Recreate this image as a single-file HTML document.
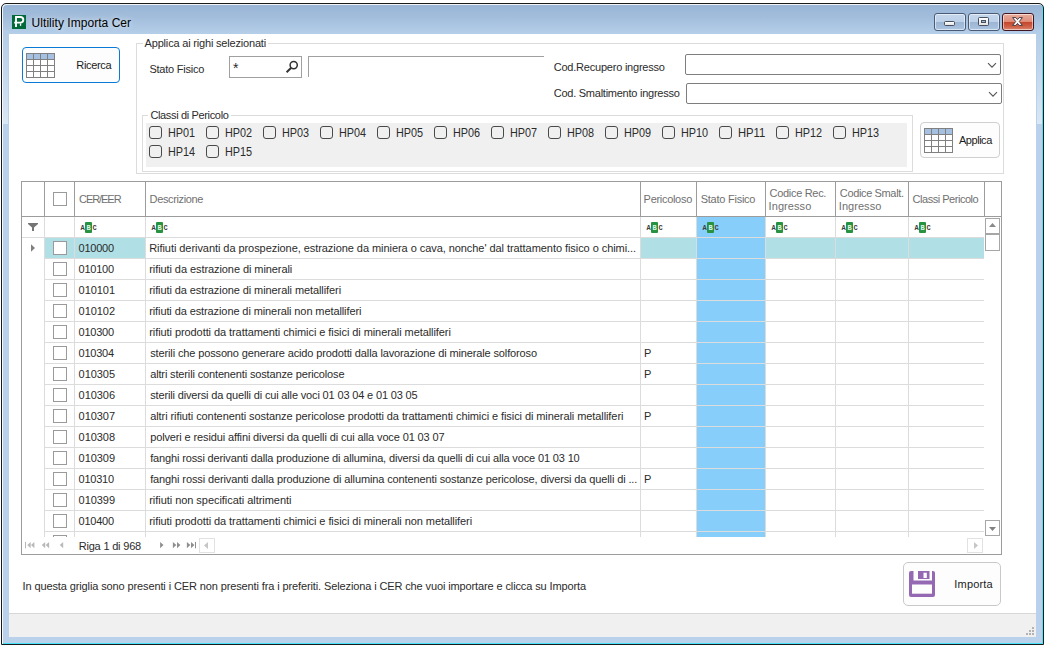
<!DOCTYPE html>
<html lang="it"><head><meta charset="utf-8"><title>Ultility Importa Cer</title>
<style>
html,body{margin:0;padding:0}
body{width:1045px;height:646px;background:#fff;position:relative;overflow:hidden;font-family:'Liberation Sans',sans-serif;font-size:11px;color:#2b2b2b}
div,span,svg{position:absolute;box-sizing:border-box}
.t{white-space:pre;line-height:14px;height:14px}
.win{left:1px;top:3px;width:1043px;height:642px;border:1px solid #1a1a1a;border-radius:5px 5px 0 0;
 background:linear-gradient(to bottom,#98b4d5 0px,#a3bedc 14px,#b5cfe9 30px,#b9d1ea 90px,#b9d1ea 100%);
 box-shadow:inset 1px 1px 0 rgba(255,255,255,.85),inset -1px -1px 0 #45e4fb}
.client{left:9px;top:34px;width:1027px;height:603px;background:#fff}
.cb{width:13px;height:13px;border:1px solid #4a4a4a;border-radius:3px;background:#f0f0f0}
.gcb{width:14px;height:14px;border:1px solid #9a9a9a;background:#fff}
.vl{width:1px;background:#dcdcdc}
.hl{height:1px;background:#dcdcdc}
.hv{width:1px;background:#9c9c9c}
.wb{top:13px;width:32px;height:18px;border:1px solid #4a5b75;border-radius:3px;box-shadow:inset 0 0 0 1px rgba(255,255,255,.55)}
</style></head><body>

<div class="win"></div>
<div class="wb" style="left:934px;background:linear-gradient(to bottom,#c4d6eb 0,#bdd1e8 47%,#9cb5d3 50%,#a4bddb 80%,#adc6e2 100%)"><div style="left:9px;top:7px;width:11px;height:5px;border:1px solid #46505f;border-radius:1.5px;background:linear-gradient(#fff,#e4e4e4)"></div></div>
<div class="wb" style="left:968px;background:linear-gradient(to bottom,#c4d6eb 0,#bdd1e8 47%,#9cb5d3 50%,#a4bddb 80%,#adc6e2 100%)"><div style="left:9px;top:3px;width:11px;height:9px;border:1px solid #46505f;border-radius:1.5px;background:linear-gradient(#fff,#e4e4e4)"><div style="left:2px;top:2px;width:5px;height:3px;border:1px solid #46505f;background:#9db6d4"></div></div></div>
<div class="wb" style="left:1002px;border-color:#431520;background:linear-gradient(to bottom,#e9ad9e 0,#df8d79 47%,#c3452b 50%,#cf6249 80%,#dc8a74 100%)"><svg style="left:9px;top:3px" width="12" height="10" viewBox="0 0 12 10"><path d="M0.6 0.6 L3.9 0.6 L5.5 2.6 L7.1 0.6 L10.4 0.6 L7.3 4.5 L10.4 8.4 L7.1 8.4 L5.5 6.4 L3.9 8.4 L0.6 8.4 L3.7 4.5 Z" fill="#fafafa" stroke="#4a3c42" stroke-width="1" stroke-linejoin="round"/></svg></div>
<div style="left:12px;top:15px;width:14px;height:14px;background:#006a3a"><svg style="left:0;top:0" width="14" height="14" viewBox="0 0 14 14"><path d="M4 11.9 V2 H8.3 C12.3 2 12.3 7.6 8.3 7.6 H2.2" fill="none" stroke="#fff" stroke-width="1.9"/><rect x="7.9" y="8.4" width="1.3" height="2.4" fill="#fff"/></svg></div>
<div style="left:3px;top:30px;width:5px;height:94px;background:linear-gradient(to bottom,#b4cce7 0,#c3d7ed 45%,#dae7f4 100%)"></div>
<div style="left:1037px;top:30px;width:5px;height:94px;background:linear-gradient(to bottom,#b4cce7 0,#c3d7ed 45%,#dae7f4 100%)"></div>
<div class="client"></div>
<div style="left:9px;top:613px;width:1027px;height:24px;background:#f0f0f0;border-top:1px solid #d7d7d7"></div>
<div style="left:1032px;top:627px;width:2px;height:2px;background:#b3b3b3"></div>
<div style="left:1029px;top:630px;width:2px;height:2px;background:#b3b3b3"></div>
<div style="left:1032px;top:630px;width:2px;height:2px;background:#b3b3b3"></div>
<div style="left:1026px;top:633px;width:2px;height:2px;background:#b3b3b3"></div>
<div style="left:1029px;top:633px;width:2px;height:2px;background:#b3b3b3"></div>
<div style="left:1032px;top:633px;width:2px;height:2px;background:#b3b3b3"></div>
<div style="left:22px;top:47px;width:98px;height:36px;border:1px solid #0a7ad6;border-radius:4px;background:#fdfdfd"></div>
<svg style="left:26px;top:53px" width="29" height="25" viewBox="0 0 29 25" shape-rendering="crispEdges"><rect x="0.5" y="0.5" width="28" height="24" fill="#fff" stroke="#808080"/><rect x="1" y="1" width="27" height="5" fill="#a6c0e2"/><line x1="7.5" y1="0" x2="7.5" y2="25" stroke="#808080"/><line x1="14.5" y1="0" x2="14.5" y2="25" stroke="#808080"/><line x1="21.5" y1="0" x2="21.5" y2="25" stroke="#808080"/><line x1="0" y1="6.5" x2="29" y2="6.5" stroke="#808080"/><line x1="0" y1="12.5" x2="29" y2="12.5" stroke="#808080"/><line x1="0" y1="18.5" x2="29" y2="18.5" stroke="#808080"/></svg>
<div style="left:136px;top:43px;width:868px;height:131px;border:1px solid #dcdcdc"></div>
<div style="left:229px;top:56px;width:73px;height:22px;border:1px solid #a0a0a0;background:#fff"></div>
<svg style="left:284px;top:59px" width="16" height="16" viewBox="0 0 16 16"><circle cx="9.7" cy="6.1" r="3.6" fill="none" stroke="#333" stroke-width="1.5"/><line x1="7.2" y1="8.8" x2="2.6" y2="13.2" stroke="#333" stroke-width="2"/></svg>
<div style="left:308px;top:56px;width:236px;height:21px;border-top:1px solid #a0a0a0;border-left:1px solid #a0a0a0;background:#fff"></div>
<div style="left:685px;top:54px;width:316px;height:21px;border:1px solid #7e7e7e;border-radius:2px;background:#fff"><svg style="right:3px;top:7px" width="11" height="7" viewBox="0 0 11 7"><path d="M2 1.2 L6 5.2 L10 1.2" fill="none" stroke="#555" stroke-width="1.1"/></svg></div>
<div style="left:686px;top:83px;width:316px;height:21px;border:1px solid #7e7e7e;border-radius:2px;background:#fff"><svg style="right:3px;top:7px" width="11" height="7" viewBox="0 0 11 7"><path d="M2 1.2 L6 5.2 L10 1.2" fill="none" stroke="#555" stroke-width="1.1"/></svg></div>
<div style="left:142px;top:115px;width:771px;height:57px;border:1px solid #dcdcdc"></div>
<div style="left:146px;top:123px;width:761px;height:44px;background:#f0f0f0"></div>
<div class="cb" style="left:149px;top:126px"></div>
<div class="cb" style="left:206px;top:126px"></div>
<div class="cb" style="left:263px;top:126px"></div>
<div class="cb" style="left:320px;top:126px"></div>
<div class="cb" style="left:377px;top:126px"></div>
<div class="cb" style="left:434px;top:126px"></div>
<div class="cb" style="left:491px;top:126px"></div>
<div class="cb" style="left:548px;top:126px"></div>
<div class="cb" style="left:605px;top:126px"></div>
<div class="cb" style="left:662px;top:126px"></div>
<div class="cb" style="left:719px;top:126px"></div>
<div class="cb" style="left:776px;top:126px"></div>
<div class="cb" style="left:833px;top:126px"></div>
<div class="cb" style="left:149px;top:145px"></div>
<div class="cb" style="left:206px;top:145px"></div>
<div style="left:920px;top:122px;width:80px;height:36px;border:1px solid #d0d0d0;border-radius:4px;background:#fdfdfd"></div>
<svg style="left:924px;top:128px" width="29" height="25" viewBox="0 0 29 25" shape-rendering="crispEdges"><rect x="0.5" y="0.5" width="28" height="24" fill="#fff" stroke="#808080"/><rect x="1" y="1" width="27" height="5" fill="#a6c0e2"/><line x1="7.5" y1="0" x2="7.5" y2="25" stroke="#808080"/><line x1="14.5" y1="0" x2="14.5" y2="25" stroke="#808080"/><line x1="21.5" y1="0" x2="21.5" y2="25" stroke="#808080"/><line x1="0" y1="6.5" x2="29" y2="6.5" stroke="#808080"/><line x1="0" y1="12.5" x2="29" y2="12.5" stroke="#808080"/><line x1="0" y1="18.5" x2="29" y2="18.5" stroke="#808080"/></svg>
<div style="left:21px;top:181px;width:981px;height:374px;border:1px solid #9c9c9c;background:#fff"></div>
<div style="left:45px;top:238px;width:100px;height:20px;background:#b0e0e6"></div>
<div style="left:641px;top:238px;width:343px;height:20px;background:#b0e0e6"></div>
<div style="left:697px;top:217px;width:68px;height:320px;background:#87cefa"></div>
<div style="left:21px;top:216px;width:981px;height:1px;background:#9c9c9c"></div>
<div class="hv" style="left:44px;top:182px;height:34px"></div>
<div class="vl" style="left:44px;top:217px;height:320px"></div>
<div class="hv" style="left:74px;top:182px;height:34px"></div>
<div class="vl" style="left:74px;top:217px;height:320px"></div>
<div class="hv" style="left:145px;top:182px;height:34px"></div>
<div class="vl" style="left:145px;top:217px;height:320px"></div>
<div class="hv" style="left:640px;top:182px;height:34px"></div>
<div class="vl" style="left:640px;top:217px;height:320px"></div>
<div class="hv" style="left:696px;top:182px;height:34px"></div>
<div class="vl" style="left:696px;top:217px;height:320px"></div>
<div class="hv" style="left:765px;top:182px;height:34px"></div>
<div class="vl" style="left:765px;top:217px;height:320px"></div>
<div class="hv" style="left:835px;top:182px;height:34px"></div>
<div class="vl" style="left:835px;top:217px;height:320px"></div>
<div class="hv" style="left:908px;top:182px;height:34px"></div>
<div class="vl" style="left:908px;top:217px;height:320px"></div>
<div class="hv" style="left:984px;top:182px;height:34px"></div>
<div class="hv" style="left:984px;top:217px;height:337px;background:#fff"></div>
<div class="hl" style="left:22px;top:237px;width:962px"></div>
<div class="hl" style="left:44px;top:258px;width:940px"></div>
<div class="hl" style="left:44px;top:279px;width:940px"></div>
<div class="hl" style="left:44px;top:300px;width:940px"></div>
<div class="hl" style="left:44px;top:321px;width:940px"></div>
<div class="hl" style="left:44px;top:342px;width:940px"></div>
<div class="hl" style="left:44px;top:363px;width:940px"></div>
<div class="hl" style="left:44px;top:384px;width:940px"></div>
<div class="hl" style="left:44px;top:405px;width:940px"></div>
<div class="hl" style="left:44px;top:426px;width:940px"></div>
<div class="hl" style="left:44px;top:447px;width:940px"></div>
<div class="hl" style="left:44px;top:468px;width:940px"></div>
<div class="hl" style="left:44px;top:489px;width:940px"></div>
<div class="hl" style="left:44px;top:510px;width:940px"></div>
<div class="hl" style="left:44px;top:531px;width:940px"></div>
<div class="gcb" style="left:53px;top:192px"></div>
<div class="gcb" style="left:53px;top:241px"></div>
<div class="gcb" style="left:53px;top:262px"></div>
<div class="gcb" style="left:53px;top:283px"></div>
<div class="gcb" style="left:53px;top:304px"></div>
<div class="gcb" style="left:53px;top:325px"></div>
<div class="gcb" style="left:53px;top:346px"></div>
<div class="gcb" style="left:53px;top:367px"></div>
<div class="gcb" style="left:53px;top:388px"></div>
<div class="gcb" style="left:53px;top:409px"></div>
<div class="gcb" style="left:53px;top:430px"></div>
<div class="gcb" style="left:53px;top:451px"></div>
<div class="gcb" style="left:53px;top:472px"></div>
<div class="gcb" style="left:53px;top:493px"></div>
<div class="gcb" style="left:53px;top:514px"></div>
<div style="left:53px;top:535px;width:14px;height:2px;border:1px solid #9a9a9a;border-bottom:0;background:#fff"></div>
<svg style="left:28px;top:223px" width="10" height="8" viewBox="0 0 10 8"><path d="M0 0 H10 V1 L6 4.6 V8 H4 V4.6 L0 1 Z" fill="#757575"/></svg>
<svg style="left:31px;top:244px" width="5" height="8" viewBox="0 0 5 8"><path d="M0 0.3 L4 4 L0 7.7 Z" fill="#808080"/></svg>
<div style="left:81px;top:222px;width:16px;height:11px"><div style="left:4px;top:0;width:7px;height:11px;border-radius:1px;background:#27923f"></div><span style="font-family:'Liberation Mono',monospace;font-weight:bold;font-size:7px;line-height:7px;height:7px;top:3px;width:5px;text-align:center;left:-1px;color:#3c3c3c">A</span><span style="font-family:'Liberation Mono',monospace;font-weight:bold;font-size:7px;line-height:7px;height:7px;top:3px;width:5px;text-align:center;left:5px;color:#e4f5e7">B</span><span style="font-family:'Liberation Mono',monospace;font-weight:bold;font-size:7px;line-height:7px;height:7px;top:3px;width:5px;text-align:center;left:11px;color:#3c3c3c">C</span></div>
<div style="left:152px;top:222px;width:16px;height:11px"><div style="left:4px;top:0;width:7px;height:11px;border-radius:1px;background:#27923f"></div><span style="font-family:'Liberation Mono',monospace;font-weight:bold;font-size:7px;line-height:7px;height:7px;top:3px;width:5px;text-align:center;left:-1px;color:#3c3c3c">A</span><span style="font-family:'Liberation Mono',monospace;font-weight:bold;font-size:7px;line-height:7px;height:7px;top:3px;width:5px;text-align:center;left:5px;color:#e4f5e7">B</span><span style="font-family:'Liberation Mono',monospace;font-weight:bold;font-size:7px;line-height:7px;height:7px;top:3px;width:5px;text-align:center;left:11px;color:#3c3c3c">C</span></div>
<div style="left:647px;top:222px;width:16px;height:11px"><div style="left:4px;top:0;width:7px;height:11px;border-radius:1px;background:#27923f"></div><span style="font-family:'Liberation Mono',monospace;font-weight:bold;font-size:7px;line-height:7px;height:7px;top:3px;width:5px;text-align:center;left:-1px;color:#3c3c3c">A</span><span style="font-family:'Liberation Mono',monospace;font-weight:bold;font-size:7px;line-height:7px;height:7px;top:3px;width:5px;text-align:center;left:5px;color:#e4f5e7">B</span><span style="font-family:'Liberation Mono',monospace;font-weight:bold;font-size:7px;line-height:7px;height:7px;top:3px;width:5px;text-align:center;left:11px;color:#3c3c3c">C</span></div>
<div style="left:703px;top:222px;width:16px;height:11px"><div style="left:4px;top:0;width:7px;height:11px;border-radius:1px;background:#27923f"></div><span style="font-family:'Liberation Mono',monospace;font-weight:bold;font-size:7px;line-height:7px;height:7px;top:3px;width:5px;text-align:center;left:-1px;color:#3c3c3c">A</span><span style="font-family:'Liberation Mono',monospace;font-weight:bold;font-size:7px;line-height:7px;height:7px;top:3px;width:5px;text-align:center;left:5px;color:#e4f5e7">B</span><span style="font-family:'Liberation Mono',monospace;font-weight:bold;font-size:7px;line-height:7px;height:7px;top:3px;width:5px;text-align:center;left:11px;color:#3c3c3c">C</span></div>
<div style="left:772px;top:222px;width:16px;height:11px"><div style="left:4px;top:0;width:7px;height:11px;border-radius:1px;background:#27923f"></div><span style="font-family:'Liberation Mono',monospace;font-weight:bold;font-size:7px;line-height:7px;height:7px;top:3px;width:5px;text-align:center;left:-1px;color:#3c3c3c">A</span><span style="font-family:'Liberation Mono',monospace;font-weight:bold;font-size:7px;line-height:7px;height:7px;top:3px;width:5px;text-align:center;left:5px;color:#e4f5e7">B</span><span style="font-family:'Liberation Mono',monospace;font-weight:bold;font-size:7px;line-height:7px;height:7px;top:3px;width:5px;text-align:center;left:11px;color:#3c3c3c">C</span></div>
<div style="left:842px;top:222px;width:16px;height:11px"><div style="left:4px;top:0;width:7px;height:11px;border-radius:1px;background:#27923f"></div><span style="font-family:'Liberation Mono',monospace;font-weight:bold;font-size:7px;line-height:7px;height:7px;top:3px;width:5px;text-align:center;left:-1px;color:#3c3c3c">A</span><span style="font-family:'Liberation Mono',monospace;font-weight:bold;font-size:7px;line-height:7px;height:7px;top:3px;width:5px;text-align:center;left:5px;color:#e4f5e7">B</span><span style="font-family:'Liberation Mono',monospace;font-weight:bold;font-size:7px;line-height:7px;height:7px;top:3px;width:5px;text-align:center;left:11px;color:#3c3c3c">C</span></div>
<div style="left:915px;top:222px;width:16px;height:11px"><div style="left:4px;top:0;width:7px;height:11px;border-radius:1px;background:#27923f"></div><span style="font-family:'Liberation Mono',monospace;font-weight:bold;font-size:7px;line-height:7px;height:7px;top:3px;width:5px;text-align:center;left:-1px;color:#3c3c3c">A</span><span style="font-family:'Liberation Mono',monospace;font-weight:bold;font-size:7px;line-height:7px;height:7px;top:3px;width:5px;text-align:center;left:5px;color:#e4f5e7">B</span><span style="font-family:'Liberation Mono',monospace;font-weight:bold;font-size:7px;line-height:7px;height:7px;top:3px;width:5px;text-align:center;left:11px;color:#3c3c3c">C</span></div>
<div style="left:985px;top:218px;width:15px;height:16px;border:1px solid #a6a6a6;background:#fff"><svg style="left:3px;top:4px" width="7" height="4" viewBox="0 0 7 4"><path d="M0 4 L3.5 0 L7 4 Z" fill="#8a8a8a"/></svg></div>
<div style="left:985px;top:234px;width:15px;height:17px;border:1px solid #a6a6a6;background:#fff"></div>
<div style="left:985px;top:520px;width:15px;height:16px;border:1px solid #a6a6a6;background:#fff"><svg style="left:3px;top:6px" width="7" height="4" viewBox="0 0 7 4"><path d="M0 0 L3.5 4 L7 0 Z" fill="#808080"/></svg></div>
<div style="left:22px;top:537px;width:979px;height:17px;background:#fff"></div>
<svg style="left:22px;top:537px" width="200" height="17" viewBox="0 0 200 17"><rect x="3" y="4.9" width="1" height="6.4" fill="#b8b8b8"/><path d="M8.7 4.9 L5.3 8.100000000000001 L8.7 11.3 Z" fill="#b8b8b8"/><path d="M12.4 4.9 L9.0 8.100000000000001 L12.4 11.3 Z" fill="#b8b8b8"/><path d="M23.2 4.9 L19.8 8.100000000000001 L23.2 11.3 Z" fill="#b8b8b8"/><path d="M27.099999999999998 4.9 L23.7 8.100000000000001 L27.099999999999998 11.3 Z" fill="#b8b8b8"/><path d="M41.199999999999996 4.9 L37.8 8.100000000000001 L41.199999999999996 11.3 Z" fill="#b8b8b8"/><path d="M138.1 4.9 L141.5 8.100000000000001 L138.1 11.3 Z" fill="#8e8e8e"/><path d="M150.9 4.9 L154.3 8.100000000000001 L150.9 11.3 Z" fill="#8e8e8e"/><path d="M155.0 4.9 L158.4 8.100000000000001 L155.0 11.3 Z" fill="#8e8e8e"/><path d="M164.9 4.9 L168.3 8.100000000000001 L164.9 11.3 Z" fill="#8e8e8e"/><path d="M169.0 4.9 L172.4 8.100000000000001 L169.0 11.3 Z" fill="#8e8e8e"/><rect x="173" y="4.9" width="1" height="6.4" fill="#8e8e8e"/></svg>
<div style="left:199px;top:538px;width:16px;height:15px;border:1px solid #e2e2e2;background:#fff"><svg style="left:4px;top:3px" width="4" height="7" viewBox="0 0 4 7"><path d="M4 0 L0 3.5 L4 7 Z" fill="#c6c6c6"/></svg></div>
<div style="left:967px;top:538px;width:16px;height:15px;border:1px solid #e2e2e2;background:#fff"><svg style="left:6px;top:3px" width="4" height="7" viewBox="0 0 4 7"><path d="M0 0 L4 3.5 L0 7 Z" fill="#c6c6c6"/></svg></div>
<div style="left:903px;top:562px;width:98px;height:44px;border:1px solid #c9c9c9;border-radius:5px;background:#fdfdfd"></div>
<svg style="left:909px;top:571px" width="26" height="26" viewBox="0 0 26 26"><rect x="0" y="0" width="26" height="26" rx="2" fill="#9468b2"/><rect x="4.5" y="0" width="18.5" height="9.5" fill="#fdfdfd"/><rect x="9" y="0" width="11.5" height="8" fill="#9468b2"/><rect x="14.5" y="1.7" width="3.3" height="5.3" fill="#fdfdfd"/><rect x="3" y="13.5" width="20" height="9.2" fill="#fdfdfd"/></svg>
<span class="t" style="left:31.60px;top:15.50px;font-size:12px;color:#000;letter-spacing:0.042px;text-shadow:0 0 5px rgba(255,255,255,.55),0 0 9px rgba(255,255,255,.45);">Ultility Importa Cer</span>
<span class="t" style="left:76.30px;top:58.00px;font-size:11px;color:#1c1c1c;letter-spacing:-0.333px;">Ricerca</span>
<span class="t" style="left:144.60px;top:36.00px;font-size:11px;color:#2b2b2b;letter-spacing:-0.185px;background:#fff;padding:0 2px;margin-left:-2px;">Applica ai righi selezionati</span>
<span class="t" style="left:149.40px;top:62.30px;font-size:11px;color:#2b2b2b;letter-spacing:-0.218px;">Stato Fisico</span>
<span class="t" style="left:233.00px;top:60.50px;font-size:14px;color:#2b2b2b;letter-spacing:0.000px;">*</span>
<span class="t" style="left:553.70px;top:60.00px;font-size:11px;color:#2b2b2b;letter-spacing:-0.215px;">Cod.Recupero ingresso</span>
<span class="t" style="left:553.70px;top:86.30px;font-size:11px;color:#2b2b2b;letter-spacing:-0.246px;">Cod. Smaltimento ingresso</span>
<span class="t" style="left:150.40px;top:108.00px;font-size:11px;color:#2b2b2b;letter-spacing:-0.347px;background:#fff;padding:0 2px;margin-left:-2px;">Classi di Pericolo</span>
<span class="t" style="left:168.20px;top:125.60px;font-size:12px;color:#2b2b2b;transform:scaleX(0.9034);transform-origin:0 0;">HP01</span>
<span class="t" style="left:225.20px;top:125.60px;font-size:12px;color:#2b2b2b;transform:scaleX(0.9034);transform-origin:0 0;">HP02</span>
<span class="t" style="left:282.20px;top:125.60px;font-size:12px;color:#2b2b2b;transform:scaleX(0.9034);transform-origin:0 0;">HP03</span>
<span class="t" style="left:339.20px;top:125.60px;font-size:12px;color:#2b2b2b;transform:scaleX(0.9034);transform-origin:0 0;">HP04</span>
<span class="t" style="left:396.20px;top:125.60px;font-size:12px;color:#2b2b2b;transform:scaleX(0.9034);transform-origin:0 0;">HP05</span>
<span class="t" style="left:453.20px;top:125.60px;font-size:12px;color:#2b2b2b;transform:scaleX(0.9034);transform-origin:0 0;">HP06</span>
<span class="t" style="left:510.20px;top:125.60px;font-size:12px;color:#2b2b2b;transform:scaleX(0.9034);transform-origin:0 0;">HP07</span>
<span class="t" style="left:567.20px;top:125.60px;font-size:12px;color:#2b2b2b;transform:scaleX(0.9034);transform-origin:0 0;">HP08</span>
<span class="t" style="left:624.20px;top:125.60px;font-size:12px;color:#2b2b2b;transform:scaleX(0.9034);transform-origin:0 0;">HP09</span>
<span class="t" style="left:681.20px;top:125.60px;font-size:12px;color:#2b2b2b;transform:scaleX(0.9034);transform-origin:0 0;">HP10</span>
<span class="t" style="left:738.16px;top:125.60px;font-size:12px;color:#2b2b2b;transform:scaleX(0.9357);transform-origin:0 0;">HP11</span>
<span class="t" style="left:795.20px;top:125.60px;font-size:12px;color:#2b2b2b;transform:scaleX(0.9034);transform-origin:0 0;">HP12</span>
<span class="t" style="left:852.20px;top:125.60px;font-size:12px;color:#2b2b2b;transform:scaleX(0.9034);transform-origin:0 0;">HP13</span>
<span class="t" style="left:168.20px;top:144.60px;font-size:12px;color:#2b2b2b;transform:scaleX(0.9034);transform-origin:0 0;">HP14</span>
<span class="t" style="left:225.20px;top:144.60px;font-size:12px;color:#2b2b2b;transform:scaleX(0.9034);transform-origin:0 0;">HP15</span>
<span class="t" style="left:959.00px;top:133.40px;font-size:11px;color:#1c1c1c;letter-spacing:-0.467px;">Applica</span>
<span class="t" style="left:79.00px;top:192.00px;font-size:11px;color:#707070;letter-spacing:-1.050px;">CER/EER</span>
<span class="t" style="left:149.60px;top:192.00px;font-size:11px;color:#707070;letter-spacing:-0.370px;">Descrizione</span>
<span class="t" style="left:643.60px;top:192.00px;font-size:11px;color:#707070;letter-spacing:-0.300px;">Pericoloso</span>
<span class="t" style="left:700.70px;top:192.00px;font-size:11px;color:#707070;letter-spacing:-0.245px;">Stato Fisico</span>
<span class="t" style="left:769.60px;top:186.00px;font-size:11px;color:#707070;letter-spacing:-0.310px;">Codice Rec.</span>
<span class="t" style="left:768.60px;top:199.00px;font-size:11px;color:#707070;letter-spacing:0.071px;">Ingresso</span>
<span class="t" style="left:839.80px;top:186.00px;font-size:11px;color:#707070;letter-spacing:-0.358px;">Codice Smalt.</span>
<span class="t" style="left:838.80px;top:199.00px;font-size:11px;color:#707070;letter-spacing:0.043px;">Ingresso</span>
<span class="t" style="left:912.60px;top:192.00px;font-size:11px;color:#707070;letter-spacing:-0.479px;">Classi Pericolo</span>
<span class="t" style="left:78.60px;top:241.00px;font-size:11px;color:#2b2b2b;letter-spacing:-0.260px;">010000</span>
<span class="t" style="left:149.20px;top:241.00px;font-size:11px;color:#2b2b2b;letter-spacing:-0.059px;">Rifiuti derivanti da prospezione, estrazione da miniera o cava, nonche&#x27; dal trattamento fisico o chimi...</span>
<span class="t" style="left:78.60px;top:262.00px;font-size:11px;color:#2b2b2b;letter-spacing:-0.260px;">010100</span>
<span class="t" style="left:149.20px;top:262.00px;font-size:11px;color:#2b2b2b;letter-spacing:-0.075px;">rifiuti da estrazione di minerali</span>
<span class="t" style="left:78.60px;top:283.00px;font-size:11px;color:#2b2b2b;letter-spacing:-0.060px;">010101</span>
<span class="t" style="left:149.20px;top:283.00px;font-size:11px;color:#2b2b2b;letter-spacing:-0.084px;">rifiuti da estrazione di minerali metalliferi</span>
<span class="t" style="left:78.60px;top:304.00px;font-size:11px;color:#2b2b2b;letter-spacing:-0.060px;">010102</span>
<span class="t" style="left:149.20px;top:304.00px;font-size:11px;color:#2b2b2b;letter-spacing:-0.100px;">rifiuti da estrazione di minerali non metalliferi</span>
<span class="t" style="left:78.60px;top:325.00px;font-size:11px;color:#2b2b2b;letter-spacing:-0.260px;">010300</span>
<span class="t" style="left:149.20px;top:325.00px;font-size:11px;color:#2b2b2b;letter-spacing:-0.073px;">rifiuti prodotti da trattamenti chimici e fisici di minerali metalliferi</span>
<span class="t" style="left:78.60px;top:346.00px;font-size:11px;color:#2b2b2b;letter-spacing:-0.260px;">010304</span>
<span class="t" style="left:150.20px;top:346.00px;font-size:11px;color:#2b2b2b;letter-spacing:-0.129px;">sterili che possono generare acido prodotti dalla lavorazione di minerale solforoso</span>
<span class="t" style="left:644.00px;top:346.00px;font-size:11px;color:#2b2b2b;letter-spacing:0.000px;">P</span>
<span class="t" style="left:78.60px;top:367.00px;font-size:11px;color:#2b2b2b;letter-spacing:-0.060px;">010305</span>
<span class="t" style="left:150.20px;top:367.00px;font-size:11px;color:#2b2b2b;letter-spacing:-0.144px;">altri sterili contenenti sostanze pericolose</span>
<span class="t" style="left:644.00px;top:367.00px;font-size:11px;color:#2b2b2b;letter-spacing:0.000px;">P</span>
<span class="t" style="left:78.60px;top:388.00px;font-size:11px;color:#2b2b2b;letter-spacing:-0.060px;">010306</span>
<span class="t" style="left:150.20px;top:388.00px;font-size:11px;color:#2b2b2b;letter-spacing:-0.156px;">sterili diversi da quelli di cui alle voci 01 03 04 e 01 03 05</span>
<span class="t" style="left:78.60px;top:409.00px;font-size:11px;color:#2b2b2b;letter-spacing:-0.060px;">010307</span>
<span class="t" style="left:150.20px;top:409.00px;font-size:11px;color:#2b2b2b;letter-spacing:-0.079px;">altri rifiuti contenenti sostanze pericolose prodotti da trattamenti chimici e fisici di minerali metalliferi</span>
<span class="t" style="left:644.00px;top:409.00px;font-size:11px;color:#2b2b2b;letter-spacing:0.000px;">P</span>
<span class="t" style="left:78.60px;top:430.00px;font-size:11px;color:#2b2b2b;letter-spacing:-0.060px;">010308</span>
<span class="t" style="left:150.20px;top:430.00px;font-size:11px;color:#2b2b2b;letter-spacing:-0.130px;">polveri e residui affini diversi da quelli di cui alla voce 01 03 07</span>
<span class="t" style="left:78.60px;top:451.00px;font-size:11px;color:#2b2b2b;letter-spacing:-0.060px;">010309</span>
<span class="t" style="left:150.20px;top:451.00px;font-size:11px;color:#2b2b2b;letter-spacing:-0.145px;">fanghi rossi derivanti dalla produzione di allumina, diversi da quelli di cui alla voce 01 03 10</span>
<span class="t" style="left:78.60px;top:472.00px;font-size:11px;color:#2b2b2b;letter-spacing:-0.260px;">010310</span>
<span class="t" style="left:150.20px;top:472.00px;font-size:11px;color:#2b2b2b;letter-spacing:-0.122px;">fanghi rossi derivanti dalla produzione di allumina contenenti sostanze pericolose, diversi da quelli di ...</span>
<span class="t" style="left:644.00px;top:472.00px;font-size:11px;color:#2b2b2b;letter-spacing:0.000px;">P</span>
<span class="t" style="left:78.60px;top:493.00px;font-size:11px;color:#2b2b2b;letter-spacing:-0.060px;">010399</span>
<span class="t" style="left:149.20px;top:493.00px;font-size:11px;color:#2b2b2b;letter-spacing:-0.042px;">rifiuti non specificati altrimenti</span>
<span class="t" style="left:78.60px;top:514.00px;font-size:11px;color:#2b2b2b;letter-spacing:-0.260px;">010400</span>
<span class="t" style="left:149.20px;top:514.00px;font-size:11px;color:#2b2b2b;letter-spacing:-0.071px;">rifiuti prodotti da trattamenti chimici e fisici di minerali non metalliferi</span>
<span class="t" style="left:78.70px;top:539.00px;font-size:11px;color:#2b2b2b;letter-spacing:-0.192px;">Riga 1 di 968</span>
<span class="t" style="left:22.60px;top:578.50px;font-size:11px;color:#2b2b2b;letter-spacing:-0.118px;">In questa griglia sono presenti i CER non presenti fra i preferiti. Seleziona i CER che vuoi importare e clicca su Importa</span>
<span class="t" style="left:954.30px;top:576.60px;font-size:11px;color:#1c1c1c;letter-spacing:0.183px;">Importa</span>
</body></html>
